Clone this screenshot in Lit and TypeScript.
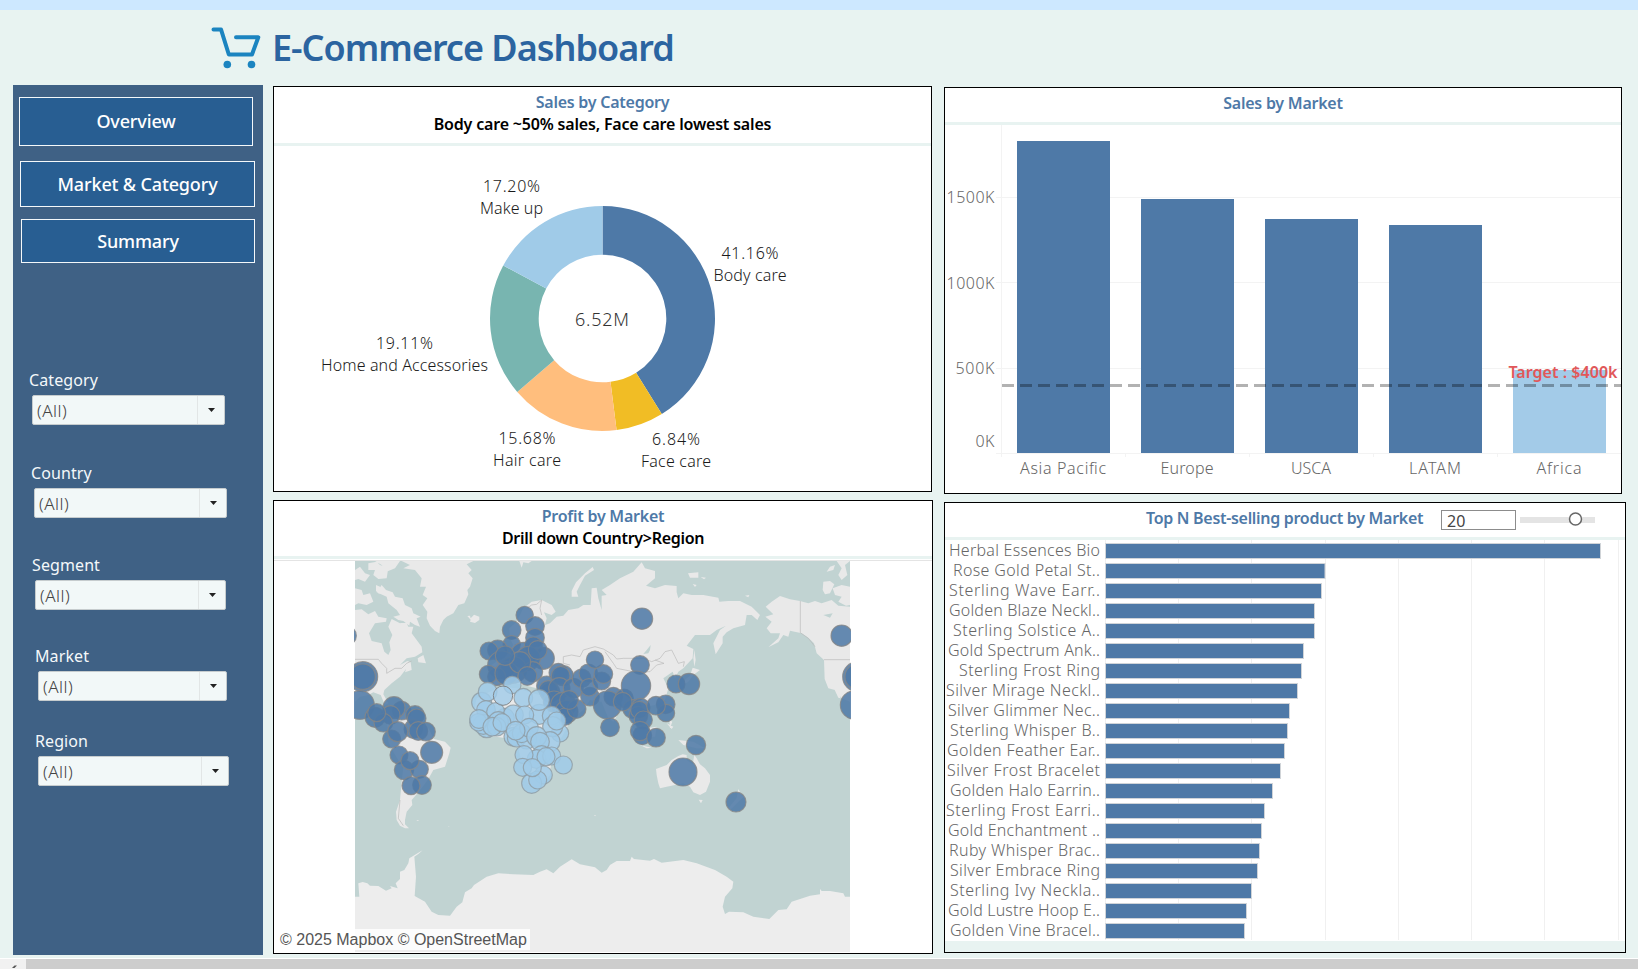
import { LitElement, html, svg, css } from "lit";
import { customElement, property } from "lit/decorators.js";

const FONT = css`"Noto Sans", "Open Sans", sans-serif`;

const FILTERS = ["Category", "Country", "Segment", "Market", "Region"];

const SLICES = [
  { v: 41.16, c: "#4e79a7", name: "Body care", w: 73, x: 477, y: 173 },
  { v: 6.84, c: "#f1bd25", name: "Face care", w: 70, x: 403, y: 359 },
  { v: 15.68, c: "#ffbe7d", name: "Hair care", w: 68, x: 254, y: 358 },
  { v: 19.11, c: "#78b5b0", name: "Home and Accessories", w: 167, x: 131.5, y: 263 },
  { v: 17.2, c: "#a0cbe8", name: "Make up", w: 63, x: 238.5, y: 106 },
];

@customElement("donut-chart")
export class DonutChart extends LitElement {
  static styles = css`
    :host { display: block; }
    svg { display: block; font: 16px ${FONT}; fill: #1a1a1a; }
    text { text-anchor: middle; font-weight: 360; }
    .total { font-size: 18px; fill: #333; }
  `;
  slice(a0: number, a1: number, color: string) {
    const cx = 329.5, cy = 232.5, R = 112.5, r = 63.8;
    const p = (a: number, q: number) =>
      `${(cx + q * Math.sin(a)).toFixed(2)} ${(cy - q * Math.cos(a)).toFixed(2)}`;
    const big = a1 - a0 > Math.PI ? 1 : 0;
    return svg`<path fill=${color} d="M${p(a0, R)}A${R} ${R} 0 ${big} 1 ${p(a1, R)}L${p(a1, r)}A${r} ${r} 0 ${big} 0 ${p(a0, r)}Z"/>`;
  }
  render() {
    let a = 0;
    const total = SLICES.reduce((s, d) => s + d.v, 0);
    return html`<svg width="657" height="345" viewBox="1 60 657 345">
      ${SLICES.map((d) => {
        const s = a;
        a += (d.v / total) * Math.PI * 2;
        return this.slice(s, a, d.c);
      })}
      ${SLICES.map((d) => svg`
        <text x=${d.x} y=${d.y} textLength=${d.v < 10 ? 48 : 57}>${d.v.toFixed(2)}%</text>
        <text x=${d.x} y=${d.y + 22} textLength=${d.w}>${d.name}</text>`)}
      <text class="total" x="329" y="240" textLength="54">6.52M</text>
    </svg>`;
  }
}

const MARKETS = [
  { name: "Asia Pacific", top: 141, w: 86 },
  { name: "Europe", top: 199, w: 53 },
  { name: "USCA", top: 219, w: 40 },
  { name: "LATAM", top: 225, w: 52 },
  { name: "Africa", top: 370, w: 45 },
];

@customElement("market-chart")
export class MarketChart extends LitElement {
  static styles = css`
    :host { display: block; }
    svg { display: block; font: 16px ${FONT}; fill: #666; }
    text { font-weight: 350; }
    .mid { text-anchor: middle; }
    .end { text-anchor: end; }
    .grid { stroke: #f3f3f3; }
    .goal { stroke: #000; stroke-opacity: 0.3; stroke-width: 3; stroke-dasharray: 12 6; }
    .goal-label { fill: #e15759; font-weight: 600; text-anchor: end; }
  `;
  render() {
    const ticks = [
      ["1500K", 197.5, 203, 48],
      ["1000K", 282.5, 288.5, 48],
      ["500K", 368.5, 374, 39],
      ["0K", 453.5, 447, 19],
    ] as [string, number, number, number][];
    return html`<svg width="676" height="368" viewBox="945 125 676 368">
      ${ticks.map((t) => svg`
        <line class="grid" x1="996" x2="1621" y1=${t[1]} y2=${t[1]}/>
        <text class="end" x="994.5" y=${t[2]} textLength=${t[3]}>${t[0]}</text>`)}
      <line class="grid" x1="1001.5" x2="1001.5" y1="125" y2="457"/>
      ${MARKETS.map((m, i) => svg`
        <line class="grid" x1=${1125.5 + i * 124} x2=${1125.5 + i * 124} y1="453" y2="457"/>
        <rect x=${1017 + i * 124} y=${m.top} width="93" height=${453 - m.top} fill=${i === 4 ? "#a3cbe8" : "#4e79a7"}/>
        <text class="mid" x=${1063 + i * 124} y="474" textLength=${m.w}>${m.name}</text>`)}
      <line class="goal" x1="1002" x2="1621" y1="385.5" y2="385.5"/>
      <text class="goal-label" x="1617.5" y="378" textLength="109">Target : $400k</text>
    </svg>`;
  }
}

const PRODUCTS: [string, number, number][] = [
  ["Herbal Essences Bio", 495, 151], ["Rose Gold Petal St..", 219.5, 147], ["Sterling Wave Earr..", 216, 151],
  ["Golden Blaze Neckl..", 209, 151], ["Sterling Solstice A..", 209, 147], ["Gold Spectrum Ank..", 198, 152],
  ["Sterling Frost Ring", 196, 141], ["Silver Mirage Neckl..", 192, 154], ["Silver Glimmer Nec..", 184, 152],
  ["Sterling Whisper B..", 182, 150], ["Golden Feather Ear..", 179, 153], ["Silver Frost Bracelet", 175, 153],
  ["Golden Halo Earrin..", 167, 150], ["Sterling Frost Earri..", 159, 154], ["Gold Enchantment ..", 156, 152],
  ["Ruby Whisper Brac..", 154, 151], ["Silver Embrace Ring", 152, 150], ["Sterling Ivy Neckla..", 146, 150],
  ["Gold Lustre Hoop E..", 141, 152], ["Golden Vine Bracel..", 139, 150],
];

@customElement("product-chart")
export class ProductChart extends LitElement {
  static styles = css`
    :host { display: block; background: #fff; }
    svg { display: block; font: 16px ${FONT}; fill: #666; }
    text { font-weight: 350; text-anchor: end; }
    .grid { stroke: #f0f0f0; }
    .bar { fill: #4e79a7; stroke: #d0d4d8; }
  `;
  render() {
    return html`<svg width="680" height="401" viewBox="945 540 680 401">
      ${[1105.5, 1178.5, 1251.5, 1325.5, 1398.5, 1471.5, 1544.5, 1618.5].map(
        (x) => svg`<line class="grid" x1=${x} x2=${x} y1="540" y2="940"/>`)}
      ${PRODUCTS.map(([name, w, tw], i) => svg`
        <rect class="bar" x="1105.5" y=${543.5 + i * 20} width=${w} height="15"/>
        <text x="1100" y=${556 + i * 20} textLength=${tw}>${name}</text>`)}
    </svg>`;
  }
}

const LAND = [
  // North America, east part
  "M15 165L35 163 55 178 75 168 85 185 110 190 108 200 75 205 57 235 65 258 95 265 103 290 115 300 122 285 118 262 127 240 115 215 125 192 150 205 168 200 175 215 190 215 185 235 200 255 215 275 217 292 195 305 170 310 150 330 172 318 182 322 185 345 165 352 168 342 150 365 125 385 103 405 100 418 115 445 105 450 92 420 70 412 55 420 30 425 15 440Z",
  "M203 310L220 300 228 325 205 322Z",
  "M80 112L95 90 108 105 128 112 135 125 158 130 165 150 185 160 190 175 212 185 200 190 210 215 195 210 180 200 178 212 160 198 145 195 130 185 150 180 140 165 115 145 110 125Z",
  "M15 100L35 105 40 120 60 115 70 140 50 150 25 145 15 150Z",
  "M15 45L30 35 45 55 60 60 45 80 25 72 15 75Z",
  "M55 25L80 20 90 30 115 38 110 70 85 72 70 60 75 45 55 45Z",
  "M75 18L150 18 135 40 115 48 95 30Z",
  "M78 90L90 95 88 118 78 108Z",
  // Greenland and Iceland
  "M155 18L370 18 350 28 365 45 355 55 368 70 360 95 352 105 355 118 343 145 325 150 310 175 290 185 280 195 270 215 268 235 255 228 240 212 230 190 232 170 218 150 232 130 218 120 228 95 210 95 215 70 195 45 160 40 180 30Z",
  "M352 183L360 182 362 190 372 179 388 185 388 195 375 204 360 200 362 194Z",
  "M508 18L545 18 535 25 520 22 515 38Z",
  // Europe and Asia
  "M430 390L440 340 425 330 470 300 490 270 480 250 478 220 500 200 520 160 545 140 575 135 605 150 617 170 605 180 582 172 590 190 585 210 600 205 620 185 640 182 655 165 685 160 700 150 722 150 725 100 740 98 745 130 755 165 755 122 770 120 755 105 780 90 810 70 850 50 875 22 885 40 915 48 915 70 888 92 915 100 945 90 980 93 980 112 985 130 1000 115 1025 120 1060 120 1105 128 1108 140 1135 138 1170 138 1205 155 1230 180 1222 195 1205 180 1190 180 1185 210 1150 220 1130 232 1118 245 1118 265 1097 298 1090 265 1110 225 1128 212 1100 225 1080 240 1035 240 1010 272 1030 282 1028 310 1000 340 985 350 975 370 968 350 940 370 955 400 945 435 915 450 885 455 890 495 870 520 845 480 820 450 790 500 775 490 755 440 720 435 700 465 650 505 620 490 590 430 560 400 500 385Z",
  "M665 125L665 108 678 82 705 55 728 36 732 45 705 62 690 90 680 110 685 125Z",
  "M1014 55L1045 52 1045 68 1020 68ZM1052 66L1068 68 1062 73ZM1028 87L1040 90 1035 96Z",
  "M1033 285L1037 315 1033 335 1030 310ZM1028 338L1050 345 1030 360 1015 380 990 395 1000 378 1020 362Z",
  "M1185 122L1198 120 1195 127Z",
  // South east Asia
  "M845 515L880 555 860 550ZM890 520L920 515 915 545 895 545ZM950 505L970 515 965 522ZM985 555L1030 560 1065 580 1040 580 1000 570ZM870 570L905 578 890 580ZM958 495L967 500 960 520Z",
  // Alaska and Canada, west part
  "M1247 155L1265 140 1290 123 1320 133 1350 138 1375 145 1395 138 1415 145 1445 135 1465 152 1500 155 1500 440 1475 430 1455 405 1435 400 1424 372 1422 315 1400 295 1392 265 1375 248 1355 235 1320 227 1315 245 1300 240 1285 262 1255 277 1285 250 1290 235 1262 235 1250 220 1265 200 1246 185 1270 178Z",
  "M1420 80L1440 78 1453 88 1440 115 1425 118 1418 105Z",
  "M1448 100L1475 90 1500 95 1500 150 1488 152 1465 140 1475 125 1455 120Z",
  "M1430 50L1440 35 1455 30 1450 45ZM1460 18L1500 18 1485 30 1492 60 1475 75 1465 60 1475 40Z",
  "M1453 403L1462 405 1472 430 1465 428Z",
  // South America
  "M110 470L160 470 215 500 235 520 252 552 285 560 302 578 298 595 285 635 250 645 235 672 220 692 200 718 185 735 187 750 170 770 165 795 165 808 177 820 165 820 150 812 140 795 138 770 150 735 155 680 160 640 130 590 115 560Z",
  // Africa
  "M380 430L450 395 500 400 600 430 620 480 655 510 605 600 600 660 565 700 535 690 510 600 500 560 470 550 400 540 365 500Z",
  // Australia and New Zealand
  "M918 642L950 630 965 615 985 603 998 598 1010 600 1010 615 1028 628 1033 600 1040 610 1050 628 1065 640 1080 660 1080 680 1068 710 1050 720 1030 712 1020 695 1000 685 975 690 950 695 930 700 925 685 920 660ZM1046 734L1058 735 1053 745Z",
  "M1165 702L1172 715 1182 725 1165 740 1140 765 1135 760 1160 730Z",
  "M199 795L208 796 203 798ZM732 780L738 781 735 784ZM295 814L299 815 296 816ZM540 463L543 463 542 465Z",
];

const ANTARCTICA =
  "M15 1025L28 1025 25 985 38 981 52 985 60 992 85 993 108 1007 125 1000 120 993 143 1000 137 985 150 972 150 950 163 945 175 925 178 910 205 893 218 886 205 897 193 905 198 965 194 1023 225 1040 245 1070 265 1080 300 1082 320 1055 337 1042 345 1012 365 1000 372 990 410 965 445 955 490 958 550 960 570 950 590 943 610 955 630 935 665 913 690 928 735 937 755 953 770 945 780 930 800 918 840 918 845 905 852 912 900 917 912 912 935 923 1000 915 1040 925 1095 945 1130 965 1150 980 1147 1000 1125 1025 1118 1055 1125 1077 1137 1070 1180 1072 1210 1085 1258 1092 1285 1065 1310 1063 1325 1040 1380 1022 1410 1018 1410 1002 1415 1008 1440 1008 1480 1015 1485 1025 1500 1025 1500 1191 15 1191Z";

const BORDERS =
  "M15 313L85 313 95 325 110 340 110 355 135 340 155 340 170 325 185 318M1351 138L1351 233 1375 250 1395 275M1422 314L1500 314M530 160L545 150 560 148 575 135 570 160 575 180M640 325L640 305 665 300 690 305 700 285 735 275 760 282 790 300 800 312 820 310 880 310 905 320 930 310 945 290 965 285 975 305 985 325 1003 320 1000 335M765 290L790 325 800 340 860 352 900 350 920 330 942 325 915 315M150 735L145 790 160 812M640 325L660 330";

type Dot = [number, number, number];
const DARK: Dot[] = [
  [-10, 242, 29], [1475, 242, 32], [38, 365, 45], [38, 365, 38], [1523, 365, 45], [1523, 365, 38], [30, 450, 43], [1514, 450, 43],
  [155, 467, 28], [132, 458, 33], [122, 480, 28], [75, 487, 30], [100, 503, 28], [80, 473, 27], [195, 480, 28], [190, 522, 28],
  [200, 490, 28], [205, 528, 28], [228, 530, 28], [125, 552, 27], [143, 530, 30], [245, 592, 33], [147, 600, 27], [162, 645, 29],
  [208, 643, 27], [180, 617, 27], [216, 690, 28], [183, 692, 27],
  [524, 180, 26], [555, 213, 28], [485, 225, 28], [555, 248, 28], [485, 268, 26], [443, 285, 30], [417, 288, 27], [520, 300, 38],
  [455, 330, 42], [550, 273, 27], [580, 310, 33], [535, 310, 36], [490, 345, 40], [440, 365, 27], [415, 358, 27], [470, 355, 35],
  [548, 350, 30], [510, 322, 32], [563, 285, 28], [465, 302, 29], [532, 363, 28],
  [590, 393, 30], [600, 412, 30], [595, 405, 28], [625, 353, 28], [640, 362, 30], [632, 362, 28], [628, 400, 32], [612, 440, 32],
  [640, 450, 38], [650, 470, 34], [645, 485, 26], [670, 400, 30], [695, 370, 28], [680, 462, 28], [715, 355, 28], [720, 425, 28],
  [657, 435, 28], [717, 397, 26], [755, 378, 27], [760, 357, 28], [735, 314, 26], [790, 425, 28], [772, 450, 42], [780, 517, 28],
  [876, 191, 32], [870, 330, 28], [822, 430, 28], [858, 392, 44], [847, 462, 28], [818, 440, 28], [872, 458, 28], [865, 482, 28],
  [868, 465, 26], [880, 495, 27], [877, 541, 28], [870, 528, 29], [918, 548, 28], [947, 448, 28], [948, 474, 26], [918, 452, 28],
  [978, 387, 27], [1017, 387, 32], [1038, 570, 29], [999, 651, 42], [1158, 741, 30],
];
const LIGHT: Dot[] = [
  [487, 390, 26], [395, 442, 30], [413, 410, 28], [408, 465, 28], [465, 488, 28], [437, 470, 27], [520, 428, 28], [490, 480, 30],
  [568, 478, 30], [567, 435, 31], [524, 480, 27], [410, 518, 30], [400, 508, 30], [385, 502, 26], [387, 492, 28], [445, 500, 30],
  [440, 515, 28], [427, 515, 28], [456, 503, 27], [605, 482, 28], [490, 545, 28], [500, 548, 28], [530, 552, 30], [515, 535, 28],
  [630, 535, 26], [537, 518, 28], [497, 527, 28], [608, 515, 30], [620, 498, 27], [600, 560, 30], [560, 545, 30], [570, 560, 28],
  [575, 600, 28], [560, 612, 28], [605, 603, 27], [522, 599, 27], [588, 605, 27], [518, 637, 27], [640, 630, 27], [580, 660, 27],
  [545, 685, 30], [563, 675, 27], [547, 638, 27],
];

@customElement("profit-map")
export class ProfitMap extends LitElement {
  static styles = css`
    :host { display: block; }
    svg { display: block; }
    .land { fill: #e9e9e9; }
    .ice { fill: #ededed; }
    .border { fill: none; stroke: #b9b9b9; stroke-width: 2; }
    .dark { fill: #4e79a7; fill-opacity: 0.86; stroke: #868686; stroke-opacity: 0.8; stroke-width: 3.5; }
    .light { fill: #a0cbe8; fill-opacity: 0.86; stroke: #8f9ba3; stroke-opacity: 0.8; stroke-width: 3.5; }
    .focus { fill: #a0cbe8; fill-opacity: 0.8; stroke: #777; stroke-width: 2.5; }
  `;
  render() {
    return html`<svg width="497" height="391" viewBox="12 18 1491 1173">
      <rect x="15" y="18" width="1485" height="1173" fill="#c1d3d2"/>
      <path class="land" d=${LAND.join("")}/>
      <path class="ice" d=${ANTARCTICA}/>
      <path d="M895 295L900 285 902 270 890 285 880 297ZM1420 180L1448 175 1440 188Z" fill="#c1d3d2"/>
      <path class="border" d=${BORDERS}/>
      ${DARK.map(([x, y, r]) => svg`<circle class="dark" cx=${x} cy=${y} r=${r}/>`)}
      ${LIGHT.map(([x, y, r]) => svg`<circle class="light" cx=${x} cy=${y} r=${r}/>`)}
      <circle class="focus" cx="459" cy="422" r="29"/>
    </svg>`;
  }
}

@customElement("filter-box")
export class FilterBox extends LitElement {
  @property() name = "";
  static styles = css`
    :host { display: block; font: 16px ${FONT}; }
    .name { color: #f4f8fa; line-height: 22px; letter-spacing: 0.1px; }
    .select { box-sizing: border-box; display: flex; height: 30px; margin: 4px 0 0 3px; background: #f2f8f8; border: 1px solid #c6ccce; border-radius: 2px; }
    .value { flex: 1; padding: 1px 0 0 4px; line-height: 28px; color: #444; font-size: 17px; font-weight: 350; letter-spacing: 0.5px; }
    .drop { width: 26px; border-left: 1px solid #e2e6e6; display: grid; place-items: center; }
  `;
  render() {
    return html`<div class="name">${this.name}</div>
      <div class="select">
        <span class="value">(All)</span>
        <span class="drop"><svg width="7" height="4" viewBox="0 0 7 4"><path d="M0 0H7L3.5 4Z" fill="#222"/></svg></span>
      </div>`;
  }
}

@customElement("app-root")
export class AppRoot extends LitElement {
  static styles = css`
    :host { display: flex; flex-direction: column; box-sizing: border-box; width: 1638px; height: 969px; overflow: hidden;
      background: #e8f3f1; font: 16px ${FONT}; border-top: 10px solid #cde8ff; }
    .header { display: flex; height: 75px; padding-left: 211px; }
    .cart { margin-top: 16px; width: 50px; height: 44px; }
    h1 { margin: 0 0 0 11px; font-size: 36px; line-height: 50px; padding-top: 13px; font-weight: 620; color: #2b64a0; white-space: nowrap; letter-spacing: -1px; }
    .main { display: flex; height: 873px; padding-left: 13px; }
    .side { box-sizing: border-box; width: 250px; height: 870px; background: #3f6185; padding: 12px 0 0 6px; }
    .nav { box-sizing: border-box; display: grid; place-items: center; border: 1px solid #f4f8fa; background: #285e92; color: #fff;
      font-size: 18px; font-weight: 500; letter-spacing: -0.15px; }
    .nav1 { width: 234px; height: 49px; }
    .nav2 { width: 235px; height: 46px; margin: 15px 0 0 1px; }
    .nav3 { width: 234px; height: 44px; margin: 12px 0 0 2px; }
    .f0 { margin-top: 106px; } .f1 { margin-top: 37px; } .f2 { margin-top: 36px; } .f3 { margin-top: 35px; } .f4 { margin-top: 29px; }
    .f0 { margin-left: 10px; width: 196px; } .f1 { margin-left: 12px; width: 196px; } .f2 { margin-left: 13px; width: 194px; }
    .f3 { margin-left: 16px; width: 192px; } .f4 { margin-left: 16px; width: 194px; }
    .col { display: flex; flex-direction: column; margin-left: 10px; }
    .card { box-sizing: border-box; background: #fff; border: 1px solid #000; overflow: hidden; }
    .category { width: 659px; height: 406px; margin-top: 1px; }
    .profit { width: 660px; height: 454px; margin-top: 8px; }
    .right { margin-left: 11px; }
    .sales { width: 678px; height: 407px; margin-top: 2px; }
    .top { width: 682px; height: 451px; margin-top: 8px; background: #e8f3f1; }
    .head { box-sizing: border-box; text-align: center; font-weight: 600; line-height: 22px; color: #4e79a7; border-bottom: 3px solid #e8f3f1; background: #fff; letter-spacing: -0.25px; white-space: nowrap; }
    .sub { color: #000; letter-spacing: -0.18px; }
    .profit .sub { letter-spacing: -0.3px; }
    .category .head { height: 59px; padding-top: 4px; }
    .sales .head { height: 37px; padding-top: 4px; }
    .profit .head { height: 58px; padding-top: 4px; }
    .top .head { height: 37px; display: flex; padding: 4px 0 0 201px; letter-spacing: -0.3px; }
    .top .title { width: 278px; text-align: left; }
    .n { box-sizing: border-box; width: 75px; height: 20px; margin: 3px 4px 0 17px; border: 1px solid #8c8c8c; text-align: left;
      padding: 1px 0 0 5px; line-height: 19px; font-weight: 400; color: #444; letter-spacing: 0; }
    .slider { margin-top: 3px; }
    .mapwrap { border-top: 1px solid #e4e4e4; margin-top: 1px; padding-left: 80px; height: 393px; }
    .credit { position: absolute; left: 274px; top: 929px; width: 256px; height: 21px; background: rgba(255,255,255,.8);
      font: 16px/22px "Liberation Sans", Arial, sans-serif; color: #555; padding-left: 6px; box-sizing: border-box; white-space: nowrap; }
    .scroll { display: flex; height: 10px; margin-top: 1px; border-top: 1px solid #fff; background: #cdcdcd; }
    .arrow { width: 26px; background: #f1f1f1; }
    .arrow svg { display: block; }
  `;
  render() {
    return html`
      <div class="header">
        <svg class="cart" viewBox="0 0 50 44" fill="none" stroke="#1b84c0" stroke-linecap="round" stroke-linejoin="round">
          <path d="M2.5 3.4H10L17.8 28.5H41L47.3 11.3H25" stroke-width="4"/>
          <circle cx="16.3" cy="38.5" r="3.8" fill="#1b84c0" stroke="none"/>
          <circle cx="40.5" cy="38.5" r="3.8" fill="#1b84c0" stroke="none"/>
        </svg>
        <h1>E-Commerce Dashboard</h1>
      </div>
      <div class="main">
        <div class="side">
          <div class="nav nav1">Overview</div>
          <div class="nav nav2">Market &amp; Category</div>
          <div class="nav nav3">Summary</div>
          ${FILTERS.map((f, i) => html`<filter-box class="f${i}" .name=${f}></filter-box>`)}
        </div>
        <div class="col">
          <div class="card category">
            <div class="head">Sales by Category<div class="sub">Body care ~50% sales, Face care lowest sales</div></div>
            <donut-chart></donut-chart>
          </div>
          <div class="card profit">
            <div class="head">Profit by Market<div class="sub">Drill down Country&gt;Region</div></div>
            <div class="mapwrap"><profit-map></profit-map></div>
            <div class="credit">© 2025 Mapbox © OpenStreetMap</div>
          </div>
        </div>
        <div class="col right">
          <div class="card sales">
            <div class="head">Sales by Market</div>
            <market-chart></market-chart>
          </div>
          <div class="card top">
            <div class="head">
              <span class="title">Top N Best-selling product by Market</span>
              <span class="n">20</span>
              <svg class="slider" width="76" height="20" viewBox="0 0 76 20">
                <rect y="7" width="75" height="6" fill="#e4e4e4"/>
                <circle cx="55.5" cy="9" r="6" fill="#fff" stroke="#666" stroke-width="1.5"/>
              </svg>
            </div>
            <product-chart></product-chart>
          </div>
        </div>
      </div>
      <div class="scroll"><div class="arrow"><svg width="26" height="9" viewBox="0 0 26 9"><path d="M12 9L14.5 6.5H17L14.5 9Z" fill="#555"/></svg></div></div>
    `;
  }
}
